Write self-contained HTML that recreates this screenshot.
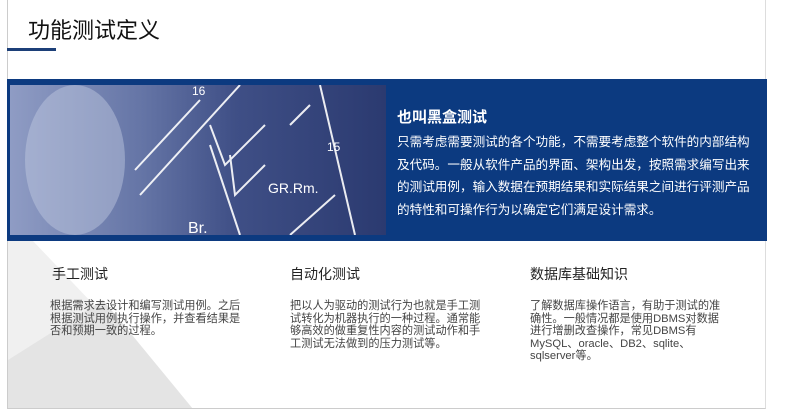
<!DOCTYPE html>
<html><head><meta charset="utf-8"><style>
*{margin:0;padding:0;box-sizing:border-box}
body{width:786px;height:416px;background:#fff;position:relative;overflow:hidden;font-family:"Liberation Sans","Noto Sans CJK SC",sans-serif}
.slide{position:absolute;left:7px;top:0;width:759px;height:409px;border-left:1px solid #ccc;border-right:1px solid #ddd;border-bottom:1px solid #ccc;background:#fff;overflow:hidden}
.t{position:absolute;left:28px;top:13px;font-size:22px;color:#111}
.bar{position:absolute;left:7px;top:48px;width:49px;height:3px;background:#1c3f78}
.band{position:absolute;left:7px;top:79px;width:760px;height:162px;background:#0c3a80}
.img{position:absolute;left:10px;top:85px;width:376px;height:150px}
.rt{position:absolute;left:397px;color:#fff}
.h{position:absolute;font-size:14px;color:#222}
.p{position:absolute;font-size:11.2px;line-height:12.5px;color:#444;width:200px}
.corner{position:absolute;right:20px;top:0;width:120px;height:6px;background:#e6e6e6}
</style></head><body>
<div class="corner"></div>
<div class="slide">
<svg width="759" height="409" style="position:absolute;left:0;top:0">
<polygon points="0,241 25,241 185,409 0,409" fill="#f0f0f0"/>
<polygon points="0,360 95,300 120,330 185,409 0,409" fill="#e4e4e4"/>
</svg>
</div>
<div class="t">功能测试定义</div>
<div class="bar"></div>
<div class="band"></div>
<svg class="img" viewBox="0 0 376 150">
<defs><linearGradient id="g" x1="0" x2="1"><stop offset="0" stop-color="#8f9cc4"/><stop offset="0.35" stop-color="#6575a6"/><stop offset="0.6" stop-color="#3f4f86"/><stop offset="1" stop-color="#2b3a70"/></linearGradient></defs>
<rect width="376" height="150" fill="url(#g)"/>
<ellipse cx="65" cy="75" rx="50" ry="75" fill="#c3cbe3" opacity=".45"/>
<g stroke="#fff" stroke-width="2" fill="none" opacity=".9">
<line x1="125" y1="85" x2="190" y2="15"/>
<line x1="130" y1="110" x2="230" y2="0"/>
<polyline points="200,40 215,80 255,40"/>
<polyline points="220,70 225,110 255,80"/>
<line x1="200" y1="60" x2="230" y2="150"/>
<line x1="310" y1="0" x2="345" y2="150"/>
<line x1="280" y1="150" x2="325" y2="110"/>
<line x1="280" y1="40" x2="300" y2="20"/>
</g>
<g fill="#fff" font-family="Liberation Sans" font-size="12"><text x="182" y="10">16</text><text x="317" y="66">15</text><text x="258" y="108" font-size="14">GR.Rm.</text><text x="178" y="148" font-size="16">Br.</text></g>
</svg>
<div class="rt" style="top:106px;font-size:15px;font-weight:bold">也叫黑盒测试</div>
<div class="rt" style="top:131px;font-size:12.6px;line-height:22.6px;width:365px">只需考虑需要测试的各个功能，不需要考虑整个软件的内部结构及代码。一般从软件产品的界面、架构出发，按照需求编写出来的测试用例，输入数据在预期结果和实际结果之间进行评测产品的特性和可操作行为以确定它们满足设计需求。</div>
<div class="h" style="left:52px;top:264px">手工测试</div>
<div class="h" style="left:290px;top:264px">自动化测试</div>
<div class="h" style="left:530px;top:264px">数据库基础知识</div>
<div class="p" style="left:50px;top:300px;width:200px">根据需求去设计和编写测试用例。之后根据测试用例执行操作，并查看结果是否和预期一致的过程。</div>
<div class="p" style="left:290px;top:300px;width:200px">把以人为驱动的测试行为也就是手工测试转化为机器执行的一种过程。通常能够高效的做重复性内容的测试动作和手工测试无法做到的压力测试等。</div>
<div class="p" style="left:530px;top:300px;width:192px">了解数据库操作语言，有助于测试的准确性。一般情况都是使用DBMS对数据进行增删改查操作，常见DBMS有MySQL、oracle、DB2、sqlite、sqlserver等。</div>
</body></html>
